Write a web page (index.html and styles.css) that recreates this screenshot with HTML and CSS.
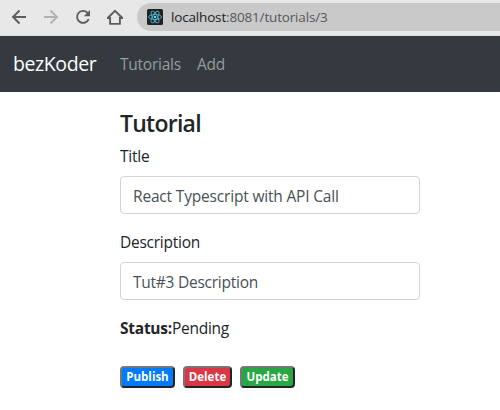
FILE: index.html
```html
<!DOCTYPE html>
<html lang="en">
<head>
<meta charset="utf-8">
<title>Tutorial</title>
<link rel="stylesheet" href="styles.css">
</head>
<body>
<header class="toolbar">
  <svg class="tool-icon" viewBox="0 0 16 16"><path d="M15 8H2M8.500 1.500L2 8l6.500 6.500"/></svg>
  <svg class="tool-icon disabled" viewBox="0 0 16 16"><path d="M1 8h13M7.500 1.500L14 8l-6.500 6.500"/></svg>
  <svg class="tool-icon" viewBox="0 0 16 16"><path d="M13.700 10A6 6 0 1 1 12.400 3.700L14 5.400"/><path class="solid" d="M15 1v6.200H8.800z"/></svg>
  <svg class="tool-icon" viewBox="0 0 16 16"><path d="M.7 9L8 1.900 15.300 9H12.900V14.900H3.100V9z"/></svg>
  <div class="address">
    <svg class="favicon" viewBox="0 0 16 16"><rect width="16" height="16" rx="1.500"/><g><ellipse cx="8" cy="8" rx="6.500" ry="2.500"/><ellipse cx="8" cy="8" rx="6.500" ry="2.500" transform="rotate(60 8 8)"/><ellipse cx="8" cy="8" rx="6.500" ry="2.500" transform="rotate(120 8 8)"/></g><circle cx="8" cy="8" r="1.300"/></svg>
    <span class="url"><span class="host">localhost</span>:8081/tutorials/3</span>
  </div>
</header>
<nav class="navbar">
  <a class="brand">bezKoder</a>
  <a class="link tutorials">Tutorials</a>
  <a class="link add">Add</a>
</nav>
<main class="content">
  <h4 class="heading">Tutorial</h4>
  <div class="group">
    <label class="label">Title</label>
    <div class="control title-value">React Typescript with API Call</div>
  </div>
  <div class="group">
    <label class="label">Description</label>
    <div class="control">Tut#3 Description</div>
  </div>
  <div class="status"><strong>Status:</strong><span>Pending</span></div>
  <div class="actions">
    <button class="badge publish">Publish</button>
    <button class="badge delete">Delete</button>
    <button class="badge update">Update</button>
  </div>
</main>
</body>
</html>
```
FILE: styles.css
```css
* { box-sizing: border-box; }
body {
  margin: 0;
  background: #fff;
  color: #212529;
  font: 15.5px/24px "Open Sans", "Noto Sans", sans-serif;
  letter-spacing: -.25px;
  white-space: nowrap;
  overflow: hidden;
}
.toolbar {
  display: flex;
  align-items: center;
  gap: 16px;
  height: 36px;
  padding: 0 0 2px 11px;
  background: #e8e8e8;
  border-bottom: 1px solid #dadcdf;
}
.tool-icon {
  width: 16px;
  height: 16px;
  flex: none;
  fill: none;
  stroke: #5b5d61;
  stroke-width: 1.9;
}
.tool-icon .solid { fill: #5b5d61; stroke: none; }
.disabled { stroke: #b0b0b0; }
.address {
  display: flex;
  align-items: center;
  gap: 8px;
  flex: 1;
  height: 28px;
  margin-left: -2px;
  padding-left: 10px;
  border-radius: 14px 0 0 14px;
  background: #c9c9c9;
}
.favicon { width: 16px; height: 16px; fill: #222; }
.favicon g { fill: none; stroke: #48b5cf; stroke-width: .9; }
.favicon circle { fill: #70d9f2; }
.url { font-size: 13.5px; letter-spacing: -.17px; color: #56585b; }
.host { color: #202124; }
.navbar {
  display: flex;
  align-items: center;
  height: 56px;
  padding: 0 13px 1px;
  background: #343a40;
}
.brand { width: 107px; color: #fff; font-size: 19.5px; letter-spacing: -.4px; }
.link { color: #999c9f; }
.tutorials { width: 77px; }
.content { width: 300px; margin: 17px 0 0 120px; }
.heading { margin: 0 0 6px; font-size: 23px; line-height: 29px; font-weight: 600; letter-spacing: -.75px; }
.group { margin-bottom: 16px; }
.label { display: block; height: 24px; margin-bottom: 8px; }
.control {
  height: 38px;
  padding: 7px 12px;
  border: 1px solid #ced4da;
  border-radius: 4px;
  color: #495057;
}
.title-value { letter-spacing: -.18px; }
.status { display: flex; }
.actions { display: flex; gap: 8px; margin-top: 26px; }
.badge {
  height: 22px;
  padding: 0;
  border: 2px solid;
  border-color: #767676 #212529 #212529 #767676;
  border-radius: 4px;
  color: #fff;
  font: 700 11.5px/18px "Open Sans", sans-serif;
}
.publish { width: 55px; background: #007bff; }
.delete { width: 49px; background: #dc3545; }
.update { width: 55px; background: #28a745; }
```
